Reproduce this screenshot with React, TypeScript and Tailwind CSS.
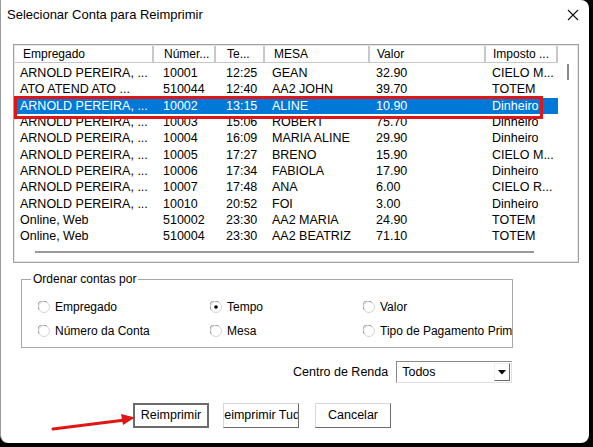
import React from "react";

const cols = [
  { w: 139, pl: 5, hpl: 7 },
  { w: 62, pl: 9, hpl: 9 },
  { w: 49, pl: 10, hpl: 10 },
  { w: 105, pl: 7, hpl: 8 },
  { w: 116, pl: 6, hpl: 6 },
  { w: 72, pl: 6, hpl: 6 },
];

const header = ["Empregado", "Númer...", "Te...", "MESA", "Valor", "Imposto ..."];

const rows = [
  ["ARNOLD PEREIRA, ...", "10001", "12:25", "GEAN", "32.90", "CIELO M..."],
  ["ATO ATEND ATO ...", "510044", "12:40", "AA2 JOHN", "39.70", "TOTEM"],
  ["ARNOLD PEREIRA, ...", "10002", "13:15", "ALINE", "10.90", "Dinheiro"],
  ["ARNOLD PEREIRA, ...", "10003", "15:06", "ROBERT", "75.70", "Dinheiro"],
  ["ARNOLD PEREIRA, ...", "10004", "16:09", "MARIA ALINE", "29.90", "Dinheiro"],
  ["ARNOLD PEREIRA, ...", "10005", "17:27", "BRENO", "15.90", "CIELO M..."],
  ["ARNOLD PEREIRA, ...", "10006", "17:34", "FABIOLA", "17.90", "Dinheiro"],
  ["ARNOLD PEREIRA, ...", "10007", "17:48", "ANA", "6.00", "CIELO R..."],
  ["ARNOLD PEREIRA, ...", "10010", "20:52", "FOI", "3.00", "Dinheiro"],
  ["Online, Web", "510002", "23:30", "AA2 MARIA", "24.90", "TOTEM"],
  ["Online, Web", "510004", "23:30", "AA2 BEATRIZ", "71.10", "TOTEM"],
];

const Radio = ({ checked = false }: { checked?: boolean }) => (
  <svg width="12" height="12" viewBox="0 0 12 12" className="shrink-0">
    <circle cx="6" cy="6" r="5.5" fill="#fff" stroke="#d4d4d4" />
    <path d="M1.2 8.5 A5 5 0 0 1 8.5 1.2" fill="none" stroke="#8a8a8a" strokeWidth="1" />
    {checked && <circle cx="6" cy="6" r="1.8" fill="#000" />}
  </svg>
);

const RadioItem = ({ label, checked }: { label: string; checked?: boolean }) => (
  <div className="flex items-center gap-[5px] whitespace-nowrap">
    <Radio checked={checked} />
    <span>{label}</span>
  </div>
);

const Btn = ({ label, primary }: { label: string; primary?: boolean }) => (
  <div
    className={
      "flex h-[25px] w-[76px] items-center justify-center overflow-hidden whitespace-nowrap bg-white " +
      (primary
        ? "border-2 border-[#6b6b6b]"
        : "border border-t-[#d8d8d8] border-l-[#d8d8d8] border-r-[#6b6b6b] border-b-[#6b6b6b]")
    }
  >
    <span className="shrink-0">{label}</span>
  </div>
);

export default function App() {
  return (
    <div className="h-[447px] w-[593px] overflow-hidden bg-black font-['Liberation_Sans',Arial,sans-serif] text-[12px] text-black">
      <div className="relative flex h-[443px] w-[589px] flex-col rounded-tr-[8px] rounded-b-[8px] border-l border-[#9a9a9a] bg-white">
        {/* Title */}
        <div className="flex h-[30px] items-center justify-between pl-[6px] pr-[10px]">
          <span className="text-[13px]">Selecionar Conta para Reimprimir</span>
          <svg width="12" height="12" viewBox="0 0 12 12">
            <path d="M1 1 L11 11 M11 1 L1 11" stroke="#111" strokeWidth="1.1" />
          </svg>
        </div>

        {/* List */}
        <div className="ml-[12px] mt-[14px] flex h-[219px] w-[566px] border border-[#a0a0a0]">
          <div className="flex flex-1 flex-col border border-[#e6e6e6]">
            <div className="flex">
              <div className="flex w-[543px] flex-col">
                <div className="flex h-[17px] border-b border-[#c8c8c8]">
                  {header.map((h, i) => (
                    <div
                      key={i}
                      style={{ width: cols[i].w, paddingLeft: cols[i].hpl }}
                      className="flex items-center overflow-hidden whitespace-nowrap border-r-2 border-r-[#c8c8c8] border-l border-l-white"
                    >
                      {h}
                    </div>
                  ))}
                </div>
                <div className="mt-[2px] flex flex-col">
                  {rows.map((r, ri) => (
                    <div
                      key={ri}
                      className={
                        "flex h-[16.3px] items-center " + (ri === 2 ? "bg-[#0078d7] text-white" : "")
                      }
                    >
                      {r.map((c, ci) => (
                        <div
                          key={ci}
                          style={{ width: cols[ci].w, paddingLeft: cols[ci].pl }}
                          className="overflow-hidden whitespace-nowrap text-[12.5px] leading-[16px]"
                        >
                          {c}
                        </div>
                      ))}
                    </div>
                  ))}
                </div>
              </div>
              {/* vertical scrollbar */}
              <div className="flex w-[19px] justify-center pt-[18px]">
                <div className="ml-[1px] h-[16px] w-[2px] bg-[#8a8a8a]" />
              </div>
            </div>
            <div className="mt-auto mb-[8px] ml-[20px] h-[2px] w-[499px] bg-[#9a9a9a]" />
          </div>
        </div>

        {/* Group box */}
        <div className="relative ml-[20px] mt-[16px] h-[69px] w-[492px] border border-[#a8a8a8]">
          <span className="absolute left-[9px] top-[-8px] bg-white px-[2px] leading-[14px]">
            Ordenar contas por
          </span>
          <div className="grid h-full grid-cols-[172px_153px_1fr] grid-rows-[24px_24px] content-start overflow-hidden pl-[16px] pt-[15px]">
            <RadioItem label="Empregado" />
            <RadioItem label="Tempo" checked />
            <RadioItem label="Valor" />
            <RadioItem label="Número da Conta" />
            <RadioItem label="Mesa" />
            <RadioItem label="Tipo de Pagamento Primário" />
          </div>
        </div>

        {/* Centro de Renda */}
        <div className="ml-[292px] mt-[13px] flex items-center gap-[8px]">
          <span className="text-[12.5px]">Centro de Renda</span>
          <div className="flex h-[22px] w-[116px] items-center border border-t-[#8a8a8a] border-l-[#8a8a8a] border-r-[#e0e0e0] border-b-[#e0e0e0] bg-white">
            <span className="flex-1 pl-[5px] text-[12.5px]">Todos</span>
            <div className="mr-[1px] flex h-[18px] w-[16px] items-center justify-center border border-t-[#f0f0f0] border-l-[#f0f0f0] border-r-[#6b6b6b] border-b-[#6b6b6b]">
              <svg width="8" height="5" viewBox="0 0 8 5">
                <path d="M0 0 H8 L4 4.5 Z" fill="#000" />
              </svg>
            </div>
          </div>
        </div>

        {/* Buttons */}
        <div className="ml-[132px] mt-[20px] flex items-center text-[12.5px]">
          <Btn label="Reimprimir" primary />
          <div className="ml-[14px] w-[75px]">
            <Btn label="Reimprimir Tudo" />
          </div>
          <div className="ml-[17px]">
            <Btn label="Cancelar" />
          </div>
        </div>

        {/* annotations */}
        <div className="absolute left-[13px] top-[96px] h-[23px] w-[529px] border-[3px] border-[#e01515]" />
        <svg className="absolute left-[48px] top-[408px]" width="90" height="26" viewBox="0 0 90 26">
          <path d="M4 21 L76 12" stroke="#e01515" strokeWidth="3" strokeLinecap="round" />
          <path d="M86 9.5 L72 6 L74 17 Z" fill="#e01515" />
        </svg>
      </div>
    </div>
  );
}
